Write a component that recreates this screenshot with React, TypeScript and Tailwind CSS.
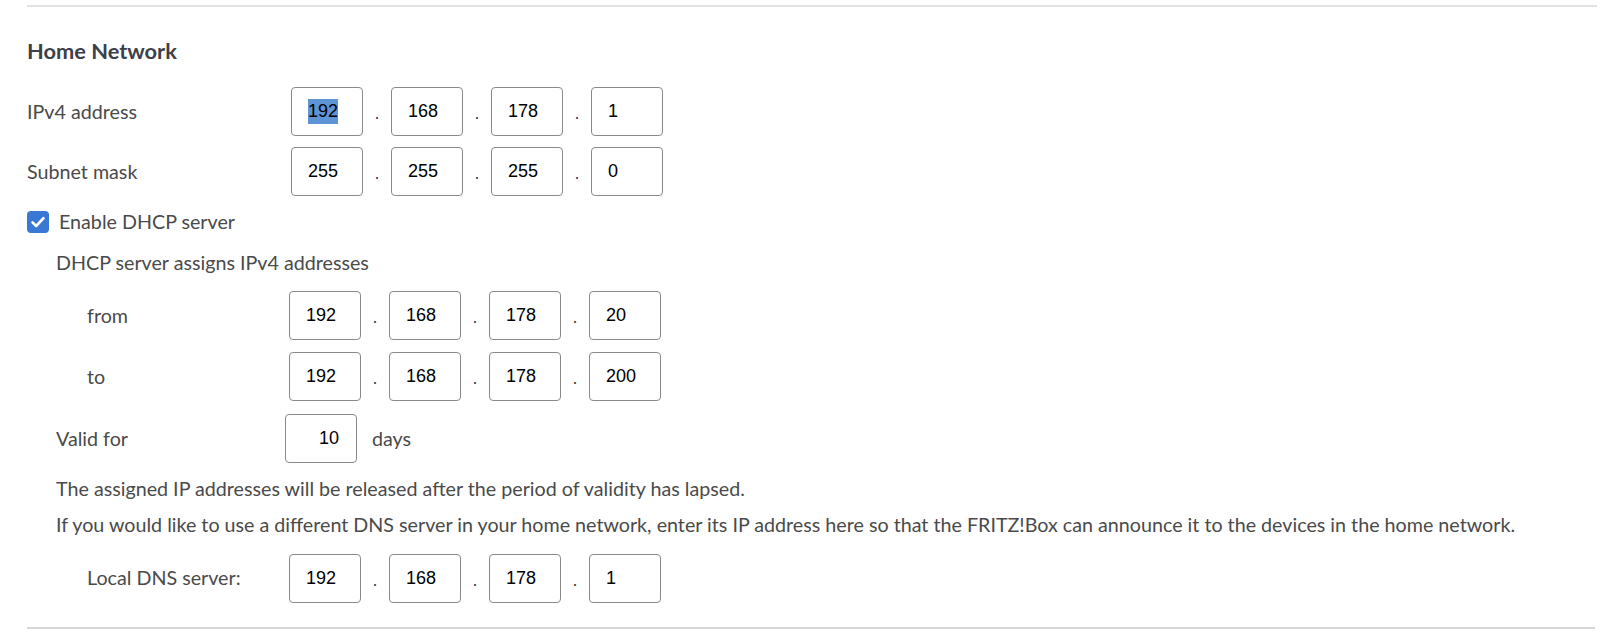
import React from "react";

const font = { fontFamily: "Lato, 'Noto Sans', sans-serif" };

function Box({ v, sel = false, right = false }: { v: string; sel?: boolean; right?: boolean }) {
  return (
    <div
      className={`w-[72px] h-[49px] border border-[#8a8a8a] rounded-[4px] bg-white flex items-center text-[18px] text-black ${
        right ? "justify-end pr-[17px]" : "pl-[16px]"
      }`}
      style={{ fontFamily: "'Liberation Sans', Arial, sans-serif" }}
    >
      {sel ? <span className="bg-[#5c94d6] leading-[25px]">{v}</span> : <span>{v}</span>}
    </div>
  );
}

function Ip({ parts, selFirst = false }: { parts: string[]; selFirst?: boolean }) {
  return (
    <div className="flex items-center">
      {parts.map((p, i) => (
        <React.Fragment key={i}>
          {i > 0 && (
            <span
              className="w-[28px] text-center text-[18px] text-[#444] pt-[4px]"
              style={{ fontFamily: "'Liberation Sans', Arial, sans-serif" }}
            >
              .
            </span>
          )}
          <Box v={p} sel={selFirst && i === 0} />
        </React.Fragment>
      ))}
    </div>
  );
}

export default function App() {
  return (
    <div className="bg-white w-[1607px] h-[633px] pt-[5px] pl-[27px] pr-[10px] text-[#4a4a4a] text-[19.7px]" style={font}>
      <div className="h-[2px] bg-[#e2e2e2]" />
      <h2 className="mt-[30px] text-[21.8px] font-bold text-[#3c4048] leading-[28px]">Home Network</h2>

      <div className="mt-[22px] flex items-center h-[49px]">
        <div className="w-[264px]">IPv4 address</div>
        <Ip parts={["192", "168", "178", "1"]} selFirst />
      </div>
      <div className="mt-[11px] flex items-center h-[49px]">
        <div className="w-[264px]">Subnet mask</div>
        <Ip parts={["255", "255", "255", "0"]} />
      </div>

      <div className="mt-[15px] flex items-center h-[22px]">
        <div className="w-[22px] h-[22px] rounded-[4px] bg-[#3b78d4] flex items-center justify-center">
          <svg width="16" height="16" viewBox="0 0 16 16" fill="none">
            <path d="M2.5 8.3 L6.2 12 L13.5 4.2" stroke="white" strokeWidth="2.6" strokeLinecap="round" strokeLinejoin="round" />
          </svg>
        </div>
        <span className="ml-[10px]">Enable DHCP server</span>
      </div>

      <div className="pl-[29px]">
        <div className="mt-[17px] leading-[26px]">DHCP server assigns IPv4 addresses</div>

        <div className="pl-[31px]">
          <div className="mt-[15px] flex items-center h-[49px]">
            <div className="w-[202px]">from</div>
            <Ip parts={["192", "168", "178", "20"]} />
          </div>
          <div className="mt-[12px] flex items-center h-[49px]">
            <div className="w-[202px]">to</div>
            <Ip parts={["192", "168", "178", "200"]} />
          </div>
        </div>

        <div className="mt-[13px] flex items-center h-[49px]">
          <div className="w-[229px]">Valid for</div>
          <Box v="10" right />
          <span className="ml-[15px]">days</span>
        </div>

        <p className="mt-[13px] leading-[26px]">
          The assigned IP addresses will be released after the period of validity has lapsed.
        </p>
        <p className="mt-[10px] leading-[26px]">
          If you would like to use a different DNS server in your home network, enter its IP address here so that the FRITZ!Box can announce it to the devices in the home network.
        </p>

        <div className="pl-[31px]">
          <div className="mt-[15px] flex items-center h-[50px]">
            <div className="w-[202px]">Local DNS server:</div>
            <Ip parts={["192", "168", "178", "1"]} />
          </div>
        </div>
      </div>

      <div className="mt-[24px] h-[2px] bg-[#d6d6d6] mr-[2px]" />
    </div>
  );
}
